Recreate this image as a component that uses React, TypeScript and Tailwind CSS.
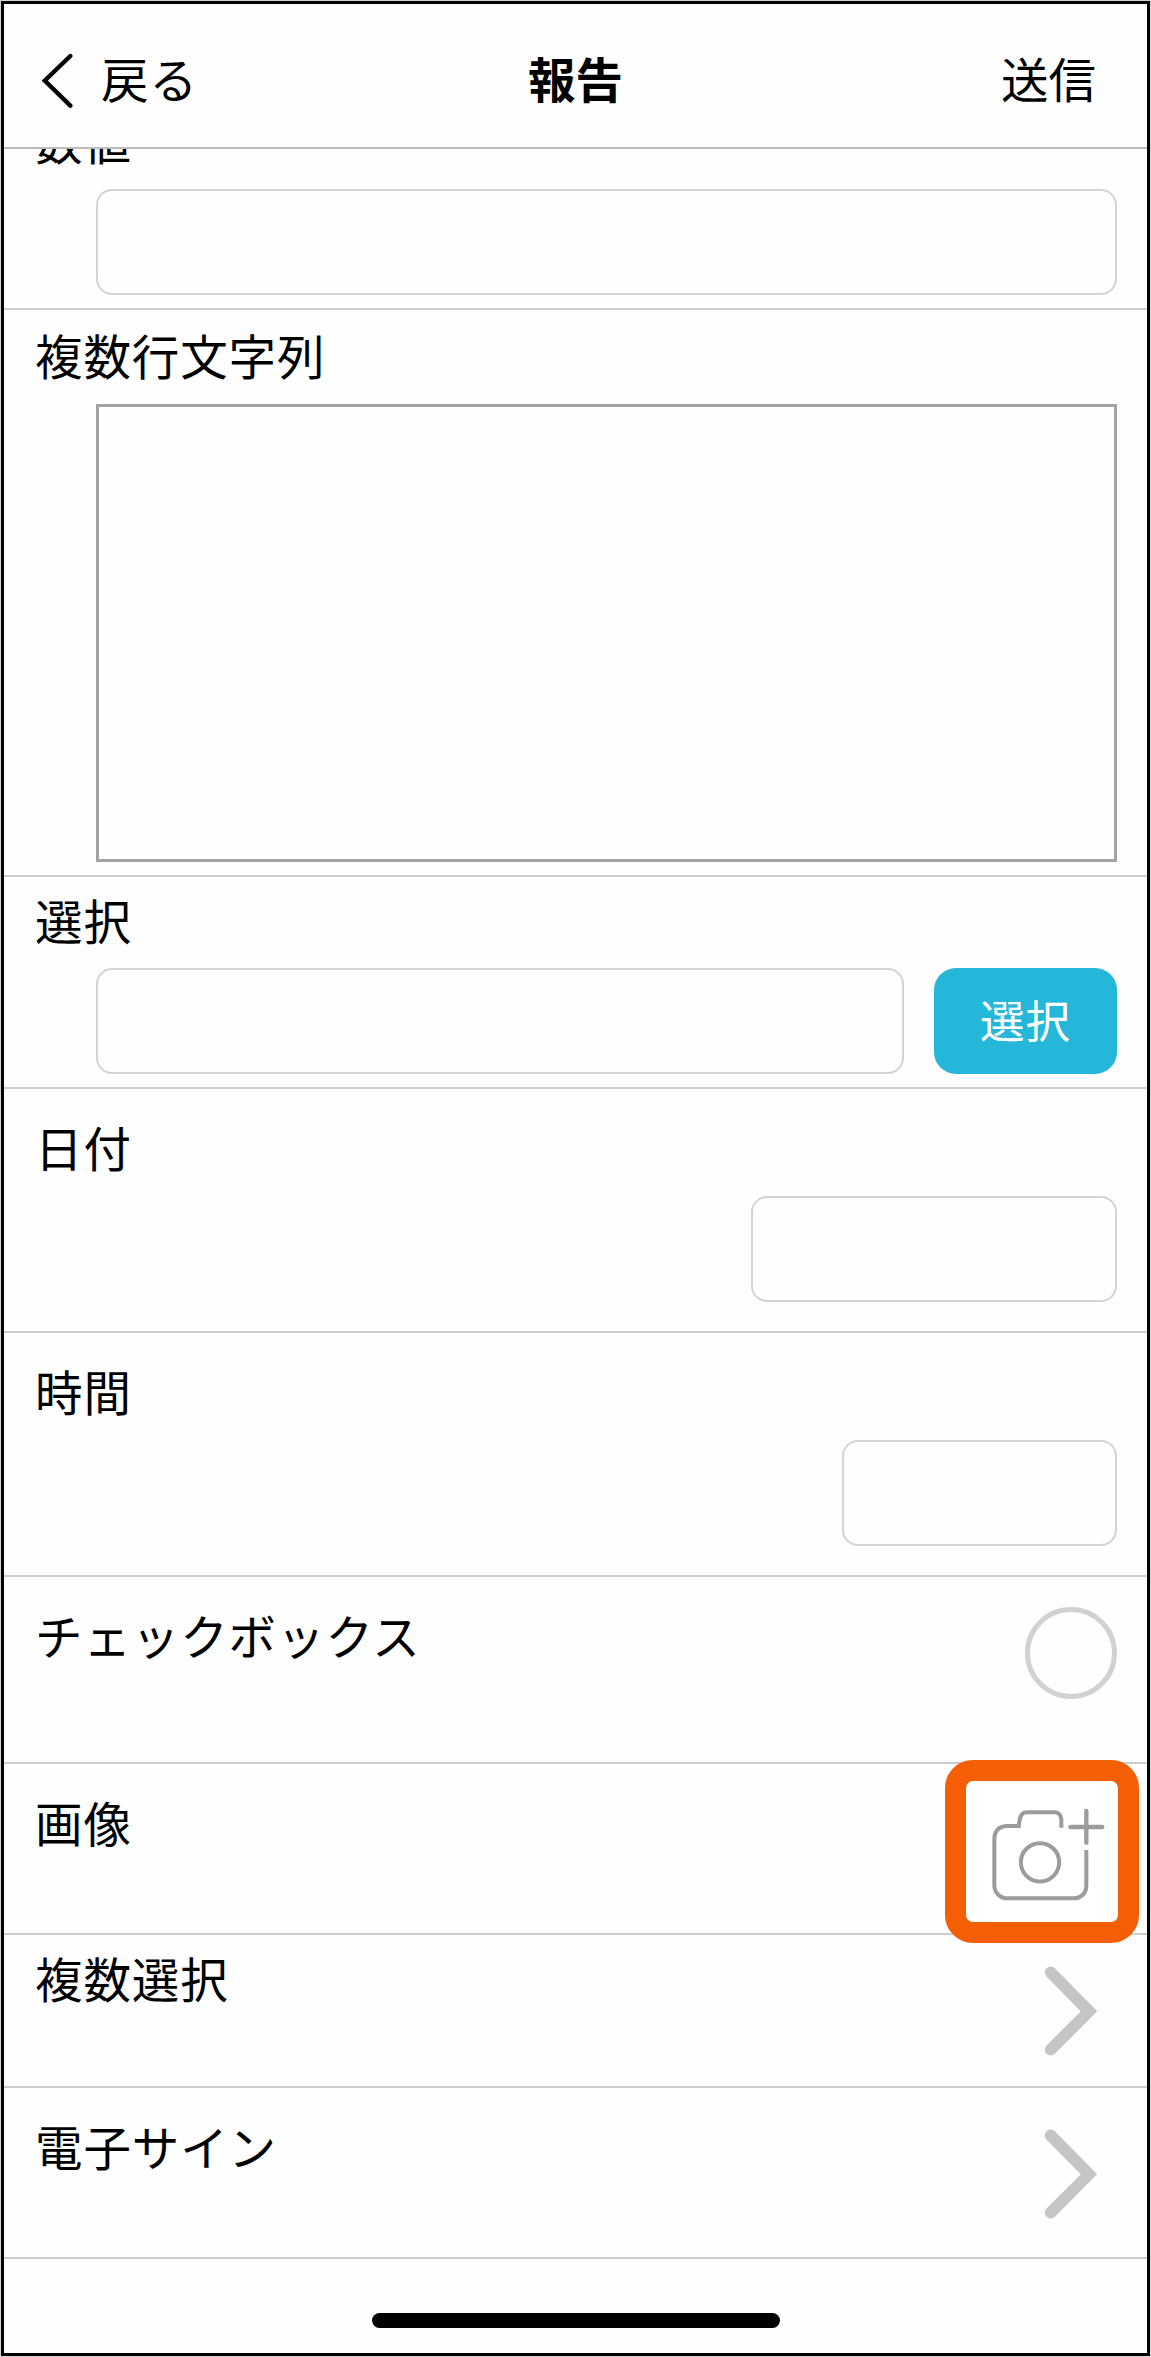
import type { ReactNode } from 'react';

function Row({ className, children }: { className: string; children: ReactNode }) {
  return (
    <div className={`flex shrink-0 justify-between border-b-2 border-[#cccccc] pl-[31px] pr-[30px] ${className}`}>
      {children}
    </div>
  );
}

function Label({ children }: { children: ReactNode }) {
  return <div className="h-[60px] whitespace-nowrap leading-[60px]">{children}</div>;
}

function Field({ className }: { className: string }) {
  return <div className={`h-[106px] rounded-[16px] border-2 border-[#d3d3d3] ${className}`} />;
}

function Chevron() {
  return (
    <svg className="mr-[19px] h-[90px] w-[54px]" viewBox="342 139 162 270" fill="none" stroke="#c5c5c7" strokeWidth="35">
      <path d="M362 158 477 275 362 390" strokeLinecap="round" />
    </svg>
  );
}

function CameraButton() {
  return (
    <div className="absolute right-[8px] top-[-4px] z-10 h-[183px] w-[194px] rounded-[28px] border-[21px] border-[#f45e05] bg-white">
      <svg className="h-full w-full" viewBox="108 123 456 423" fill="none" stroke="#9c9c9c" strokeWidth="12">
        <path d="M271 258H230Q193 260 193 299V436C193 459 211 475 233 475H431C453 475 469 459 469 437V330" />
        <path d="M266 262Q267 246 270 236Q274 217 290 217H374Q391 217 394 238L394 263" />
        <circle cx="330" cy="367" r="57.500" />
        <path d="M421 261H517M469 213V308" strokeLinecap="round" strokeWidth="13" />
      </svg>
    </div>
  );
}

export default function App() {
  return (
    <div className="h-[2357px] w-[1151px] bg-[#d0d4d0] p-px">
      <div className="flex h-full flex-col overflow-hidden border-[3px] border-black bg-[#fefefe] font-['Noto_Sans_CJK_JP','Liberation_Sans',sans-serif] text-[47.5px] tracking-[0.9px] text-black">
        <header className="z-10 grid h-[145px] shrink-0 grid-cols-3 items-start border-b-2 border-[#bcbcbc] bg-[#fefefe] pt-[44px] leading-[60px] tracking-normal">
          <div className="flex pl-[38px]">
            <svg className="mt-[5px] h-[56px] w-[32px]" viewBox="126 159 96 168" fill="none" stroke="black" strokeWidth="13">
              <path d="M211 168 134 242 211 317" strokeLinecap="round" />
            </svg>
            <span className="ml-[27px] text-[47.5px] tracking-[0.9px]">戻る</span>
          </div>
          <div className="text-center text-[47.5px] font-bold">報告</div>
          <div className="pr-[51px] text-right text-[47.5px]">送信</div>
        </header>

        <div className="mt-[-39px] flex shrink-0 flex-col">
          <Row className="h-[200px] flex-col">
            <Label>数値</Label>
            <Field className="mb-[13px] ml-[61px]" />
          </Row>
          <Row className="h-[567px] flex-col pt-[15px]">
            <Label>複数行文字列</Label>
            <div className="mb-[13px] ml-[61px] h-[458px] border-[3px] border-[#a3a3a3]" />
          </Row>
          <Row className="h-[212px] flex-col pt-[13px]">
            <Label>選択</Label>
            <div className="mb-[13px] ml-[61px] flex justify-between">
              <Field className="w-[808px]" />
              <div className="h-[106px] w-[183px] rounded-[22px] bg-[#25b7da] text-center text-[44.6px] leading-[102px] text-white">選択</div>
            </div>
          </Row>
          <Row className="h-[244px] flex-col pt-[28px]">
            <Label>日付</Label>
            <Field className="mb-[29px] w-[366px] self-end" />
          </Row>
          <Row className="h-[244px] flex-col pt-[28px]">
            <Label>時間</Label>
            <Field className="mb-[29px] w-[275px] self-end" />
          </Row>
          <Row className="h-[187px] pt-[28px]">
            <Label>チェックボックス</Label>
            <div className="mt-[2px] size-[92px] rounded-full border-[5px] border-[#d1d1d1]" />
          </Row>
          <Row className="relative h-[171px] pt-[28px]">
            <Label>画像</Label>
            <CameraButton />
          </Row>
          <Row className="h-[153px] pt-[13px]">
            <Label>複数選択</Label>
            <div className="pt-[18px]"><Chevron /></div>
          </Row>
          <Row className="h-[171px] pt-[28px]">
            <Label>電子サイン</Label>
            <div className="pt-[13px]"><Chevron /></div>
          </Row>
        </div>
        <div className="mt-[54px] h-[15px] w-[408px] shrink-0 self-center rounded-full bg-black" />
      </div>
    </div>
  );
}
